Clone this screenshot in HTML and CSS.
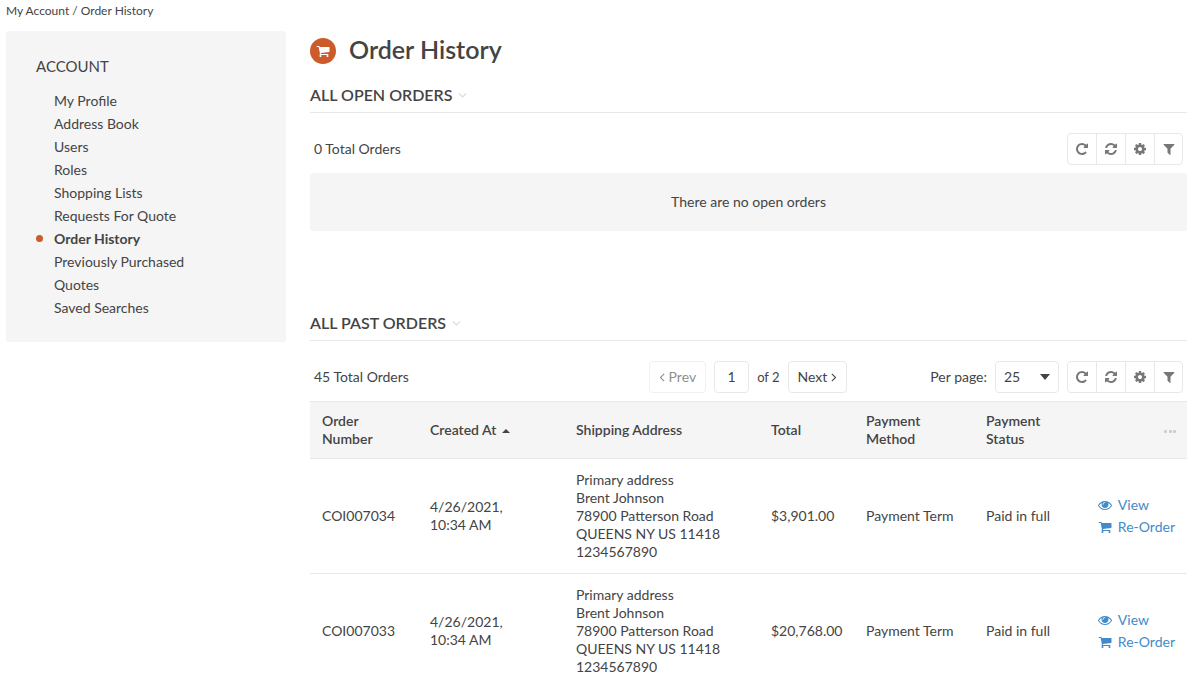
FILE: index.html
```
<!DOCTYPE html>
<html lang="en">

<head>
  <meta charset="UTF-8">
  <meta name="viewport" content="width=device-width, initial-scale=1.0">
  <title>Order History</title>
  <link rel="stylesheet" href="styles.css">
</head>

<body>
  <svg class="sprite" aria-hidden="true">
    <symbol id="repeat" viewBox="0 0 1792 1792">
      <path d="M1664 256v448q0 26-19 45t-45 19h-448q-42 0-59-40-17-39 14-69l138-138q-148-137-349-137-104 0-198.5 40.5t-163.5 109.5-109.5 163.5-40.5 198.5 40.5 198.5 109.5 163.5 163.5 109.5 198.5 40.5q119 0 225-52t179-147q7-10 23-12 15 0 25 9l137 138q9 8 9.5 20.5t-7.5 22.5q-109 132-264 204.5t-327 72.5q-156 0-298-61t-245-164-164-245-61-298 61-298 164-245 245-164 298-61q147 0 284.5 55.5t244.5 156.5l130-129q29-31 70-14 39 17 39 59z"/>
    </symbol>
    <symbol id="refresh" viewBox="0 0 1792 1792">
      <path d="M1639 1056q0 5-1 7-64 268-268 434.5t-478 166.5q-146 0-282.5-55t-243.5-157l-129 129q-19 19-45 19t-45-19-19-45v-448q0-26 19-45t45-19h448q26 0 45 19t19 45-19 45l-137 137q71 66 161 102t187 36q134 0 250-65t186-179q11-17 53-117 8-23 30-23h192q13 0 22.5 9.5t9.5 22.5zm25-800v448q0 26-19 45t-45 19h-448q-26 0-45-19t-19-45 19-45l138-138q-148-137-349-137-134 0-250 65t-186 179q-11 17-53 117-8 23-30 23h-199q-13 0-22.5-9.5t-9.5-22.5v-7q65-268 270-434.5t480-166.5q146 0 284 55.5t245 156.5l130-129q19-19 45-19t45 19 19 45z"/>
    </symbol>
    <symbol id="cog" viewBox="0 0 1792 1792">
      <path d="M1152 896q0-106-75-181t-181-75-181 75-75 181 75 181 181 75 181-75 75-181zm512-109v222q0 12-8 23t-20 13l-185 28q-19 54-39 91 35 50 107 138 10 12 10 25t-9 23q-27 37-99 108t-94 71q-12 0-26-9l-138-108q-44 23-91 38-16 136-29 186-7 28-36 28h-222q-14 0-24.5-8.5t-11.5-21.5l-28-184q-49-16-90-37l-141 107q-10 9-25 9-14 0-25-11-126-114-165-168-7-10-7-23 0-12 8-23 15-21 51-66.5t54-70.5q-27-50-41-99l-183-27q-13-2-21-12.5t-8-23.5v-222q0-12 8-23t19-13l186-28q14-46 39-92-40-57-107-138-10-12-10-24 0-10 9-23 26-36 98.5-107.5t94.5-71.5q13 0 26 10l138 107q44-23 91-38 16-136 29-186 7-28 36-28h222q14 0 24.5 8.5t11.5 21.5l28 184q49 16 90 37l142-107q9-9 24-9 13 0 25 10 129 119 165 170 7 8 7 22 0 12-8 23-15 21-51 66.5t-54 70.5q26 50 41 98l183 28q13 2 21 12.5t8 23.5z"/>
    </symbol>
    <symbol id="filter" viewBox="0 0 1792 1792">
      <path d="M1595 295q17 41-14 70l-493 493v742q0 42-39 59-13 5-25 5-27 0-45-19l-256-256q-19-19-19-45v-486l-493-493q-31-29-14-70 17-39 59-39h1280q42 0 59 39z"/>
    </symbol>
    <symbol id="eye" viewBox="0 0 1792 1792">
      <path d="M1664 960q-152-236-381-353 61 104 61 225 0 185-131.5 316.5t-316.5 131.5-316.5-131.5-131.5-316.5q0-121 61-225-229 117-381 353 133 205 333.5 326.5t434.5 121.5 434.5-121.5 333.5-326.5zm-720-384q0-20-14-34t-34-14q-125 0-214.5 89.5t-89.5 214.5q0 20 14 34t34 14 34-14 14-34q0-86 61-147t147-61q20 0 34-14t14-34zm848 384q0 34-20 69-140 230-376.5 368.5t-499.5 138.5-499.5-139-376.5-368q-20-35-20-69t20-69q140-229 376.5-368t499.5-139 499.5 139 376.5 368q20 35 20 69z"/>
    </symbol>
    <symbol id="cart" viewBox="0 0 1792 1792">
      <path d="M704 1536q0 52-38 90t-90 38-90-38-38-90 38-90 90-38 90 38 38 90zm896 0q0 52-38 90t-90 38-90-38-38-90 38-90 90-38 90 38 38 90zm128-1088v512q0 24-16.5 42.5t-40.5 21.5l-1044 122q13 60 13 70 0 16-24 64h920q26 0 45 19t19 45-19 45-45 19h-1024q-26 0-45-19t-19-45q0-11 8-31.5t16-36 21.5-40 15.5-29.5l-177-823h-204q-26 0-45-19t-19-45 19-45 45-19h256q16 0 28.5 6.5t19.5 15.5 13 24.5 8 26 5.5 29.5 4.5 26h1201q26 0 45 19t19 45z"/>
    </symbol>
    <symbol id="angle-down" viewBox="320 0 1152 1792">
      <path d="M1395 736q0 13-10 23l-466 466q-10 10-23 10t-23-10l-466-466q-10-10-10-23t10-23l50-50q10-10 23-10t23 10l393 393 393-393q10-10 23-10t23 10l50 50q10 10 10 23z"/>
    </symbol>
    <symbol id="angle-left" viewBox="512 0 768 1792">
      <path d="M1203 544q0 13-10 23l-393 393 393 393q10 10 10 23t-10 23l-50 50q-10 10-23 10t-23-10l-466-466q-10-10-10-23t10-23l466-466q10-10 23-10t23 10l50 50q10 10 10 23z"/>
    </symbol>
    <symbol id="angle-right" viewBox="512 0 768 1792">
      <path d="M1171 960q0 13-10 23l-466 466q-10 10-23 10t-23-10l-50-50q-10-10-10-23t10-23l393-393-393-393q-10-10-10-23t10-23l50-50q10-10 23-10t23 10l466 466q10 10 10 23z"/>
    </symbol>
    <symbol id="ellipsis" viewBox="0 0 14 14">
      <rect x="1" y="6" width="3" height="3" rx="1"/>
      <rect x="6" y="6" width="3" height="3" rx="1"/>
      <rect x="10" y="6" width="3" height="3" rx="1"/>
    </symbol>
  </svg>

  <nav class="breadcrumbs" aria-label="Breadcrumbs">
    <a href="#">My Account</a> / <span>Order History</span>
  </nav>

  <div class="page">
    <aside class="sidebar">
      <h2 class="sidebar-title">ACCOUNT</h2>
      <ul class="menu">
        <li><a href="#">My Profile</a></li>
        <li><a href="#">Address Book</a></li>
        <li><a href="#">Users</a></li>
        <li><a href="#">Roles</a></li>
        <li><a href="#">Shopping Lists</a></li>
        <li><a href="#">Requests For Quote</a></li>
        <li class="active"><a href="#">Order History</a></li>
        <li><a href="#">Previously Purchased</a></li>
        <li><a href="#">Quotes</a></li>
        <li><a href="#">Saved Searches</a></li>
      </ul>
    </aside>

    <main class="content">
      <h1 class="title">
        <span class="badge"><svg class="icon"><use href="#cart"/></svg></span>
        Order History
      </h1>

      <section class="section open-orders">
        <h2 class="section-title">ALL OPEN ORDERS <svg class="icon angle"><use href="#angle-down"/></svg></h2>
        <div class="toolbar">
          <span class="total">0 Total Orders</span>
          <div class="actions">
            <button type="button" aria-label="Refresh"><svg class="icon"><use href="#repeat"/></svg></button>
            <button type="button" aria-label="Reset"><svg class="icon"><use href="#refresh"/></svg></button>
            <button type="button" aria-label="Grid settings"><svg class="icon"><use href="#cog"/></svg></button>
            <button type="button" aria-label="Filters"><svg class="icon"><use href="#filter"/></svg></button>
          </div>
        </div>
        <p class="no-data">There are no open orders</p>
      </section>

      <section class="section">
        <h2 class="section-title">ALL PAST ORDERS <svg class="icon angle"><use href="#angle-down"/></svg></h2>
        <div class="toolbar">
          <span class="total">45 Total Orders</span>
          <div class="pagination">
            <button type="button" class="btn" disabled><svg class="icon arrow"><use href="#angle-left"/></svg> Prev</button>
            <input type="text" class="page-number" value="1" aria-label="Page">
            <span class="page-count">of 2</span>
            <button type="button" class="btn">Next<svg class="icon arrow"><use href="#angle-right"/></svg></button>
          </div>
          <div class="page-size">
            <label for="per-page">Per page:</label>
            <span class="select">
              <select id="per-page">
                <option>10</option>
                <option selected>25</option>
                <option>50</option>
                <option>100</option>
              </select>
            </span>
          </div>
          <div class="actions">
            <button type="button" aria-label="Refresh"><svg class="icon"><use href="#repeat"/></svg></button>
            <button type="button" aria-label="Reset"><svg class="icon"><use href="#refresh"/></svg></button>
            <button type="button" aria-label="Grid settings"><svg class="icon"><use href="#cog"/></svg></button>
            <button type="button" aria-label="Filters"><svg class="icon"><use href="#filter"/></svg></button>
          </div>
        </div>

        <table class="table">
          <thead>
            <tr>
              <th class="col-number">Order Number</th>
              <th class="col-created">Created At <span class="sort"></span></th>
              <th class="col-address">Shipping Address</th>
              <th class="col-total">Total</th>
              <th class="col-payment">Payment Method</th>
              <th class="col-status">Payment Status</th>
              <th class="col-actions"><svg class="icon more"><use href="#ellipsis"/></svg></th>
            </tr>
          </thead>
          <tbody>
            <tr>
              <td>COI007034</td>
              <td>4/26/2021,<br>10:34 AM</td>
              <td>Primary address<br>Brent Johnson<br>78900 Patterson Road<br>QUEENS NY US 11418<br>1234567890</td>
              <td>$3,901.00</td>
              <td>Payment Term</td>
              <td>Paid in full</td>
              <td>
                <div class="row-actions">
                  <a href="#"><svg class="icon"><use href="#eye"/></svg>View</a>
                  <a href="#"><svg class="icon"><use href="#cart"/></svg>Re-Order</a>
                </div>
              </td>
            </tr>
            <tr>
              <td>COI007033</td>
              <td>4/26/2021,<br>10:34 AM</td>
              <td>Primary address<br>Brent Johnson<br>78900 Patterson Road<br>QUEENS NY US 11418<br>1234567890</td>
              <td>$20,768.00</td>
              <td>Payment Term</td>
              <td>Paid in full</td>
              <td>
                <div class="row-actions">
                  <a href="#"><svg class="icon"><use href="#eye"/></svg>View</a>
                  <a href="#"><svg class="icon"><use href="#cart"/></svg>Re-Order</a>
                </div>
              </td>
            </tr>
          </tbody>
        </table>
      </section>
    </main>
  </div>
</body>

</html>
```
FILE: styles.css
```
* {
  box-sizing: border-box;
}

body {
  font-family: Lato, sans-serif;
  font-size: 14px;
  line-height: 18px;
  margin: 0;
  padding: 2px 7px 0 6px;
  background-color: #fff;
  color: #444;
}

a {
  color: inherit;
  text-decoration: none;
}

button,
input,
select {
  font: inherit;
  color: inherit;
}

.sprite {
  display: none;
}

.icon {
  flex: none;
  width: 14px;
  height: 14px;
  fill: currentColor;
}

.breadcrumbs {
  font-size: 12px;
  margin-bottom: 11px;
}

.page {
  display: flex;
  align-items: flex-start;
  gap: 24px;
}

/* Sidebar */
.sidebar {
  flex: 0 0 280px;
  padding: 26px 30px 23px;
  background-color: #f5f5f5;
  border-radius: 3px;
}

.sidebar-title {
  margin: 0 0 14px;
  font-size: 15px;
  line-height: 18px;
  font-weight: 400;
}

.menu {
  list-style: none;
  margin: 0;
  padding: 0;
}

.menu li {
  display: flex;
  align-items: center;
  padding-left: 18px;
  line-height: 23px;
}

.menu .active {
  padding-left: 0;
  font-weight: 700;
}

.menu .active::before {
  content: "";
  width: 7px;
  height: 7px;
  margin-right: 11px;
  border-radius: 50%;
  background-color: #cc5b2c;
}

/* Content */
.content {
  flex: 1;
  min-width: 0;
}

.title {
  display: flex;
  align-items: center;
  gap: 13px;
  margin: 2px 0 18px;
  font-size: 25px;
  line-height: 32px;
  font-weight: 600;
}

.badge {
  display: flex;
  align-items: center;
  justify-content: center;
  width: 26px;
  height: 26px;
  margin-top: 4px;
  border-radius: 50%;
  background-color: #cc5b2c;
  color: #fff;
}

.open-orders {
  margin-bottom: 80px;
}

.section-title {
  display: flex;
  align-items: center;
  gap: 6px;
  margin: 0 0 20px;
  padding-bottom: 5px;
  border-bottom: 1px solid #e8e8e8;
  font-size: 16px;
  line-height: 24px;
  font-weight: 600;
}

.angle {
  width: 9px;
  color: #d0dbd9;
}

.toolbar {
  display: flex;
  align-items: center;
  margin-bottom: 8px;
  padding: 0 4px;
}

.total {
  flex: 1;
}

.actions {
  display: flex;
  border: 1px solid #e8e8e8;
  border-radius: 4px;
}

.actions button {
  display: flex;
  align-items: center;
  justify-content: center;
  width: 29px;
  height: 30px;
  padding: 0;
  border: 0;
  border-right: 1px solid #e8e8e8;
  background: none;
  color: #777;
}

.actions button:last-child {
  width: 27px;
  border-right: 0;
}

.no-data {
  margin: 0;
  padding: 20px;
  border-radius: 3px;
  background-color: #f5f5f5;
  text-align: center;
}

/* Pagination */
.pagination {
  display: flex;
  align-items: center;
  gap: 8px;
  margin-right: 83px;
}

.btn {
  display: flex;
  align-items: center;
  gap: 4px;
  height: 32px;
  padding: 0 9px;
  border: 1px solid #e8e8e8;
  border-radius: 4px;
  background-color: #fff;
}

.btn:disabled {
  opacity: 0.6;
}

.arrow {
  width: 6px;
}

.page-number {
  width: 35px;
  height: 32px;
  padding: 0 0 2px;
  border: 1px solid #e8e8e8;
  border-radius: 4px;
  text-align: center;
}

.page-count {
  font-size: 13px;
}

.page-size {
  display: flex;
  align-items: center;
  gap: 8px;
  margin-right: 8px;
}

.select {
  display: grid;
  align-items: center;
}

.select select,
.select::after {
  grid-area: 1 / 1;
}

.select select {
  appearance: none;
  width: 64px;
  height: 32px;
  padding: 0 8px;
  border: 1px solid #e8e8e8;
  border-radius: 4px;
  background-color: #fff;
}

.select::after {
  content: "";
  z-index: 1;
  justify-self: end;
  margin-right: 9px;
  border: 5px solid transparent;
  border-top: 6px solid #444;
  border-bottom: 0;
  pointer-events: none;
}

/* Orders table */
.table {
  width: 100%;
  table-layout: fixed;
  border-collapse: collapse;
}

.table th,
.table td {
  padding: 12px;
  border-bottom: 1px solid #e8e8e8;
  text-align: left;
}

.table th {
  padding: 10px 12px;
  border-top: 1px solid #e8e8e8;
  background-color: #f5f5f5;
  font-weight: 600;
}

.table td:last-child {
  padding-left: 0;
}

.col-number {
  width: 108px;
}

.col-created {
  width: 146px;
}

.col-address {
  width: 195px;
}

.col-total {
  width: 95px;
}

.col-payment,
.col-status {
  width: 120px;
}

.table .col-actions {
  padding-right: 10px;
  text-align: right;
}

.more {
  vertical-align: middle;
  color: #c8d2cc;
}

.sort {
  display: inline-block;
  margin-left: 2px;
  vertical-align: middle;
  border: 4px solid transparent;
  border-top: 0;
  border-bottom-color: #444;
}

.row-actions {
  display: grid;
  justify-content: end;
  color: #428bca;
}

.row-actions a {
  display: flex;
  align-items: center;
  gap: 6px;
  line-height: 22px;
}
```
